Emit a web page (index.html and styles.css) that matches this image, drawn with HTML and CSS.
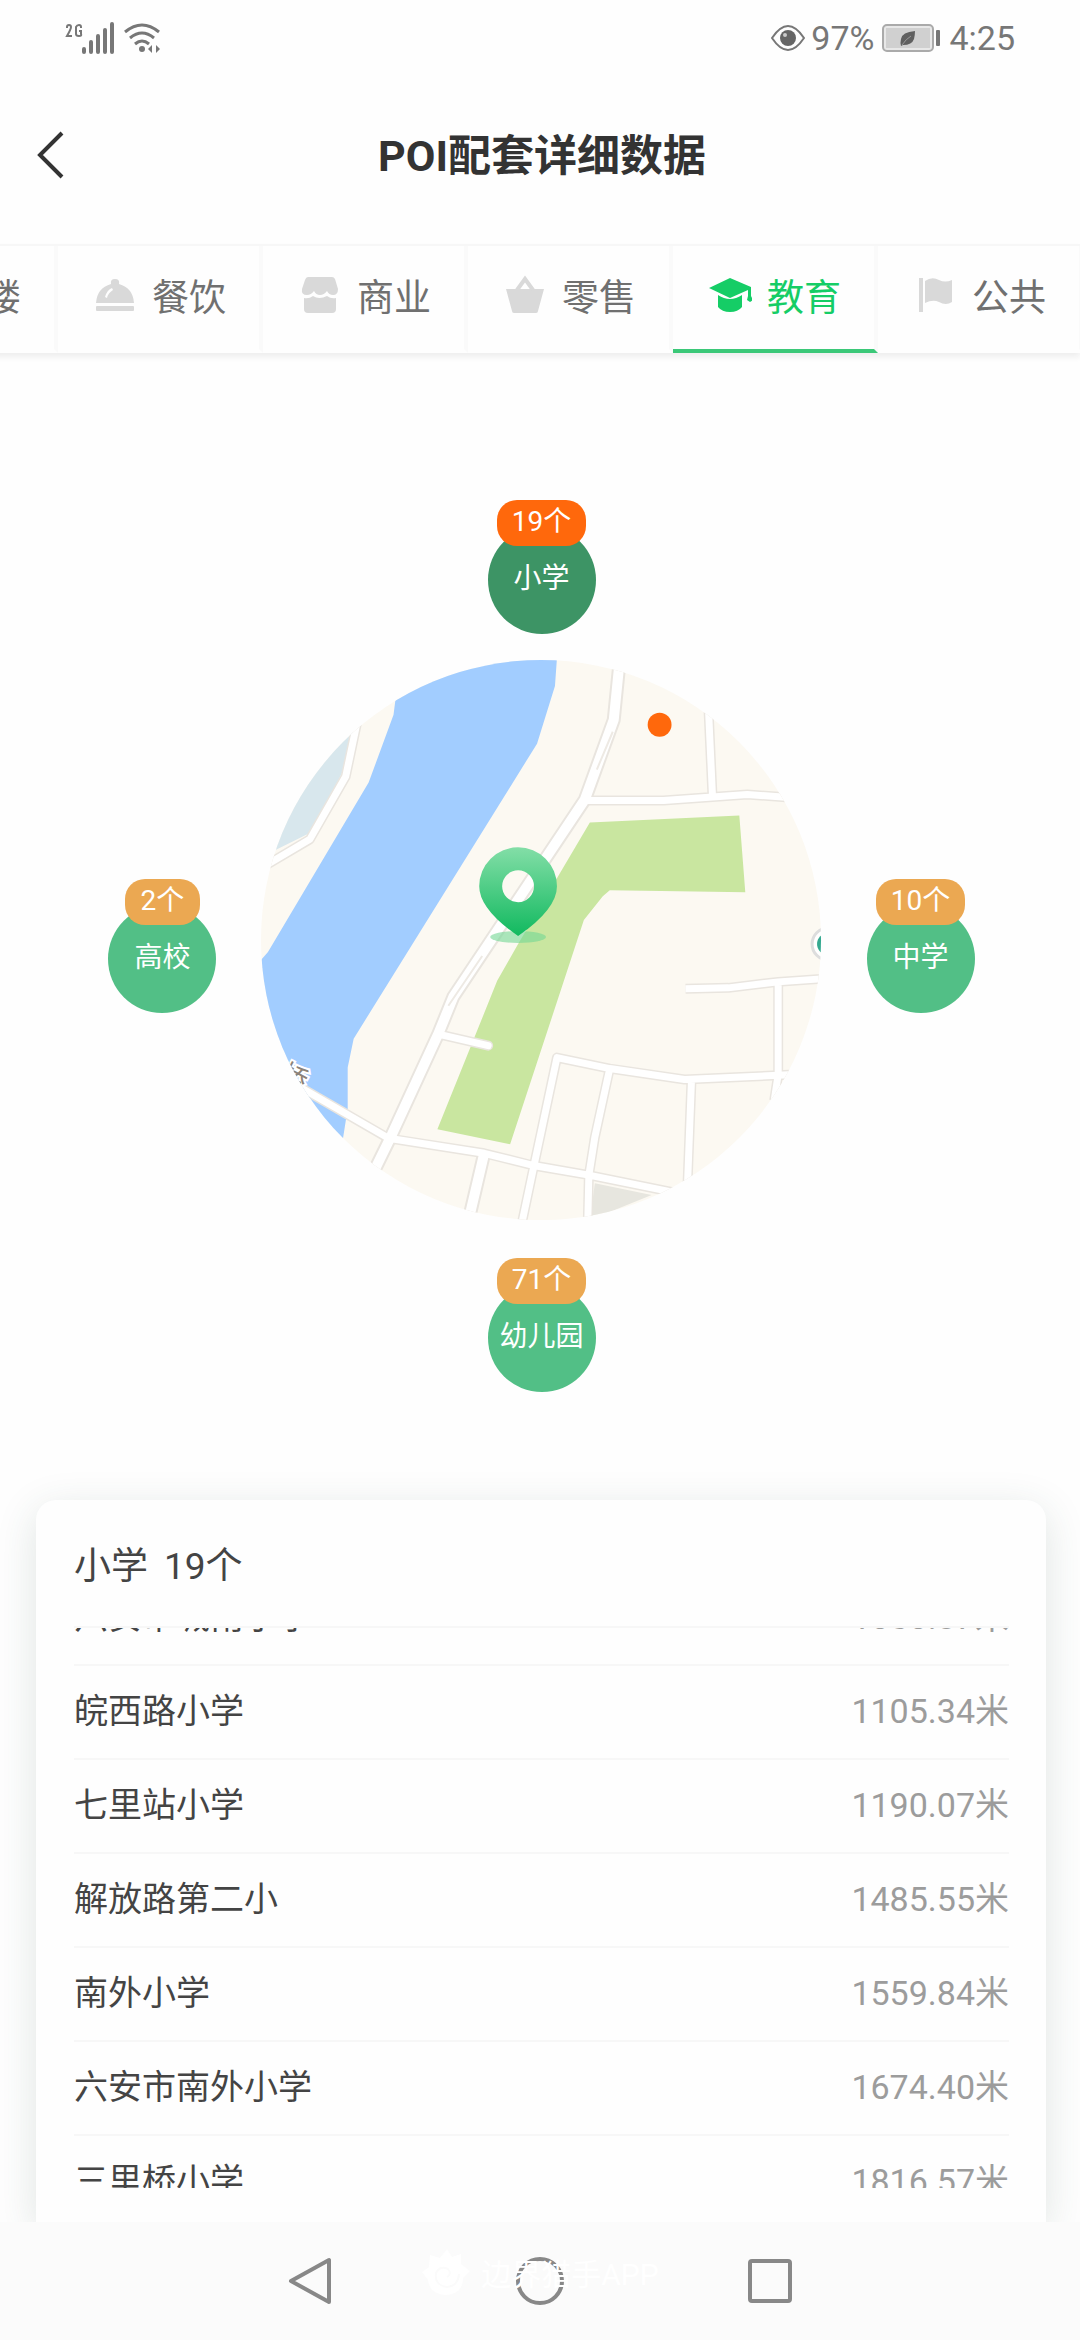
FILE: index.html
```html
<!DOCTYPE html>
<html lang="zh-CN">
<head>
<meta charset="utf-8">
<meta name="viewport" content="width=device-width, initial-scale=1">
<title>POI配套详细数据</title>
<link rel="stylesheet" href="styles.css">
</head>
<body>
<div class="app">
  <div class="status">
    <div class="status-group">
      <svg class="signal" width="98" height="34" viewBox="0 0 98 34" fill="none" aria-hidden="true">
        <path d="M2 7V6Q2 4 4 4T6 6Q6 8 2 15H7M16 7V6Q16 4 14 4T11 6V13Q11 15 14 15T16 13V10H14" stroke="#777" stroke-width="2"/>
        <path d="M19 31v-3M26 31v-10M33 31v-16M40 31v-22M47 31v-28" stroke="#777" stroke-width="4" stroke-linecap="round"/>
        <path d="M60 11q17-14 34 0M65 17q12-10 24 0M70 23q7-6 14 0" stroke="#777" stroke-width="3"/>
        <circle cx="77" cy="28" r="3" fill="#777"/>
        <path d="M87 24v8l-4-4zM91 24v8l4-4z" fill="#777"/>
      </svg>
    </div>
    <div class="status-group">
      <svg width="34" height="30" viewBox="0 0 34 30" aria-hidden="true">
        <path d="M1 15Q9 3 17 3t16 12Q25 27 17 27T1 15z" fill="none" stroke="#777" stroke-width="2"/>
        <circle cx="17" cy="15" r="8" fill="#666"/><circle cx="14" cy="12" r="2" fill="#ccc"/>
      </svg>
      <span>97%</span>
      <svg class="battery" width="58" height="30" viewBox="0 0 58 30" aria-hidden="true">
        <rect x="1" y="2" width="50" height="26" rx="4" fill="#e8e8e8" stroke="#aaa" stroke-width="2"/>
        <rect x="4" y="5" width="44" height="20" fill="#d0d0d0"/>
        <path d="M33 8Q20 9 19 16q-1 4 0 7l2-1q9 0 11-6 1-4 1-8z" fill="#606060"/>
        <path d="M20 22q4-6 9-9" stroke="#999" fill="none"/>
        <rect x="54" y="7" width="4" height="16" rx="1" fill="#777"/>
      </svg>
      <span>4:25</span>
    </div>
  </div>

  <header class="header">
    <button class="back" aria-label="返回">
      <svg width="30" height="50" viewBox="0 0 30 50" fill="none"><path d="M26 3 4 25l22 22" stroke="#333" stroke-width="4"/></svg>
    </button>
    <h1 class="title">POI配套详细数据</h1>
  </header>

  <nav class="tabs">
    <button class="tab"><svg class="tab-icon" viewBox="0 0 44 40" fill="#d9d9d9"><path d="M10 2h24v36H10z"/></svg>大楼</button>
    <button class="tab"><svg class="tab-icon" viewBox="0 0 44 40" fill="#d9d9d9"><path fill-rule="evenodd" d="M3 28Q4 13 18 9q-1-5 4-5t4 5q14 4 15 19zM12 22l2 1q1-5 6-8l-1-2q-5 2-7 9z"/><rect x="3" y="31" width="38" height="5" rx="1"/></svg>餐饮</button>
    <button class="tab"><svg class="tab-icon" viewBox="0 0 44 40" fill="#d9d9d9"><path d="M10 2h24q2 0 3 2l3 10q0 6-5 6-4 0-6-4-3 4-7 4t-6-4q-3 4-7 4-6 0-5-6l3-9q1-3 3-3z"/><path d="M6 23q5 1 9-2 6 4 14 0 4 3 9 2v11q0 4-4 4H10q-4 0-4-4z"/></svg>商业</button>
    <button class="tab"><svg class="tab-icon" viewBox="0 0 44 40" fill="#d9d9d9"><path d="M3 14h38l-6 22q0 2-2 2H11q-2 0-2-2z"/><path d="M14 15 22 4l8 11" fill="none" stroke="#d9d9d9" stroke-width="4"/></svg>零售</button>
    <button class="tab tab-active" aria-current="page"><svg class="tab-icon" viewBox="0 0 44 40" fill="#15cd66"><path d="m22 3 21 9v9l2 4-3 2-3-2 1-4v-6l-18 8-21-10z"/><path d="M10 20q12 8 24 0v12q-4 5-12 5t-12-5z"/></svg>教育</button>
    <button class="tab"><svg class="tab-icon" viewBox="0 0 44 40" fill="#d9d9d9"><path d="M6 3h4v34H6zM12 6q7-5 14-1 6 3 13 0v22q-6 4-13 0-6-3-14 1z"/></svg>公共</button>
  </nav>

  <main class="main">
    <section class="radar">
      <button class="poi poi-top poi-active"><span class="badge">19个</span><span class="disc">小学</span></button>
      <button class="poi poi-left"><span class="badge">2个</span><span class="disc">高校</span></button>
      <svg class="map" viewBox="0 0 562 562" role="img" aria-label="周边地图">
        <defs>
          <clipPath id="round"><circle cx="281" cy="281" r="281"/></clipPath>
          <linearGradient id="pin" x1="0" y1="0" x2="0" y2="1"><stop offset="0" stop-color="#83dea7"/><stop offset="1" stop-color="#11b95f"/></linearGradient>
          <g id="roads" fill="none" stroke-linejoin="round">
            <path d="M97 60 85 117 49 180 5 206"/>
            <path d="M325 141h79l84-6 42 3M449 48l4 87"/>
            <path d="m180 376 48 11" stroke-linecap="round"/>
            <path d="m38 428 90 52 96 15 48 12 57 10 84 17M262 564l12-57 23-108 53 11 75 11 110-5M350 410l-15 69-6 38-1 44M432 421l-4 106"/>
            <path d="m426 330 43-1 50-6 43-3M519 323v93l-4 26"/>
          </g>
          <g id="main-roads" fill="none" stroke-linejoin="round">
            <path d="M360 0 354 60 325 140 193 338 178 375 130 479 108 524M224 495l-15 64"/>
          </g>
        </defs>
        <g clip-path="url(#round)">
          <path d="M0 0h562v562H0z" fill="#fcf9f2"/>
          <path d="M297-2 295 26 277 84 93 380 87 409 87 450 82 482 0 482V301L7 293 108 123 133 55 140 0z" fill="#a2cdff"/>
          <path d="M94 60 88 99 71 135 48 174 10 193 0 100z" fill="#d8e7ed"/>
          <path d="M330 163 480 156 486 233 350 231 343 237 324 261 250 486 177 471 237 322 258 285z" fill="#c9e6a0"/>
          <path d="M335 525 392 537 330 562z" fill="#e7e6df"/>
          <use href="#roads" stroke="#e9e5df" stroke-width="10"/>
          <use href="#main-roads" stroke="#e9e5df" stroke-width="14"/>
          <use href="#roads" stroke="#fff" stroke-width="7"/>
          <use href="#main-roads" stroke="#fff" stroke-width="10"/>
          <path d="M353 72 337 110M222 297 188 347" stroke="#eeeae4" stroke-width="2"/>
          <text x="20" y="430" class="map-label" transform="rotate(28 36 416)">桥</text>
          <circle cx="569" cy="285" r="16" fill="#fff" stroke="#ddd" stroke-width="3"/>
          <circle cx="569" cy="285" r="11" fill="#35a990"/>
        </g>
        <circle cx="400" cy="65" r="12" fill="#ff680c"/>
        <ellipse cx="258" cy="278" rx="28" ry="6" fill="#73d795" fill-opacity=".6"/>
        <path fill-rule="evenodd" d="M258 277Q219 250 219 227a39 39 0 0 1 78 0Q297 250 258 277zM258 211a16 16 0 1 0 0 32 16 16 0 0 0 0-32z" fill="url(#pin)"/>
      </svg>
      <button class="poi poi-right"><span class="badge">10个</span><span class="disc">中学</span></button>
      <button class="poi poi-bottom"><span class="badge">71个</span><span class="disc">幼儿园</span></button>
    </section>

    <section class="card">
      <h2 class="card-title"><span>小学</span><span>19个</span></h2>
      <div class="list-view">
        <ul class="list">
          <li class="row"><span>六安市城南小学</span><span class="distance">1050.87米</span></li>
          <li class="row"><span>皖西路小学</span><span class="distance">1105.34米</span></li>
          <li class="row"><span>七里站小学</span><span class="distance">1190.07米</span></li>
          <li class="row"><span>解放路第二小</span><span class="distance">1485.55米</span></li>
          <li class="row"><span>南外小学</span><span class="distance">1559.84米</span></li>
          <li class="row"><span>六安市南外小学</span><span class="distance">1674.40米</span></li>
          <li class="row"><span>三里桥小学</span><span class="distance">1816.57米</span></li>
        </ul>
      </div>
    </section>
  </main>

  <footer class="sysbar">
    <button class="sys" aria-label="后退"><svg width="50" height="50" viewBox="0 0 50 50"><path d="M44 4v42L6 25z"/></svg></button>
    <button class="sys" aria-label="主页"><svg width="50" height="50" viewBox="0 0 50 50"><circle cx="25" cy="25" r="22"/></svg></button>
    <button class="sys" aria-label="多任务"><svg width="50" height="50" viewBox="0 0 50 50"><rect x="5" y="5" width="40" height="40" rx="2"/></svg></button>
    <div class="watermark">
      <svg width="50" height="50" viewBox="0 0 50 50"><path d="M26 2l5 8 9-3 0 10 9 7-7 7q0 16-17 17-17-1-18-15l-6-8 7-5 1-12 10 3z" fill="#fff"/><path d="M26 30q5-3 1-8-8-4-12 4-2 12 11 14 11-1 12-13" fill="none" stroke="#fbfbfb" stroke-width="2"/></svg>
      <span>边界猎手APP</span>
    </div>
  </footer>
</div>
</body>
</html>
```
FILE: styles.css
```css
* {
  box-sizing: border-box;
}

body {
  margin: 0;
  background: #fefefe;
  color: #444;
  font-family: Roboto, "Noto Sans CJK SC", sans-serif;
}

button {
  border: 0;
  padding: 0;
  background: none;
  color: inherit;
  font: inherit;
}

.app {
  display: flex;
  flex-direction: column;
  height: 100vh;
  overflow: hidden;
}

.status {
  display: flex;
  justify-content: space-between;
  height: 76px;
  padding: 0 65px;
  color: #777;
  font-size: 34px;
}

.status-group {
  display: flex;
  align-items: center;
  gap: 6px;
}

.battery {
  margin: 0 3px 0 2px;
}

.header {
  display: grid;
  grid-template-columns: 72px 1fr 68px;
  align-items: center;
  height: 168px;
  padding: 0 0 10px;
}

.back {
  display: flex;
  padding-left: 36px;
}

.title {
  margin: 0;
  padding-top: 2px;
  color: #333;
  font-size: 43px;
  line-height: 60px;
  font-weight: 700;
  text-align: center;
}

.tabs {
  display: flex;
  height: 109px;
  margin-left: -147px;
  border-top: 2px solid #f7f7f7;
  box-shadow: 0 4px 6px #eee;
}

.tab {
  display: flex;
  flex: 0 0 205px;
  align-items: center;
  justify-content: center;
  gap: 15px;
  padding: 0 0 6px 2px;
  border-right: 4px solid #fafafa;
  border-bottom: 4px solid transparent;
  color: #707070;
  font-size: 37px;
}

.tab-icon {
  width: 44px;
  height: 40px;
}

.tab-active {
  border-bottom-color: #3bc878;
  color: #15cd66;
}

.main {
  display: flex;
  flex: 1;
  flex-direction: column;
  min-height: 0;
}

.radar {
  display: grid;
  grid-template-areas:
    ". top ."
    "left map right"
    ". bottom .";
  grid-template-columns: 108px 52% 108px;
  align-items: center;
  justify-content: center;
  gap: 26px 45px;
  padding: 147px 0 108px 3px;
}

.poi {
  display: flex;
  flex-direction: column;
  align-items: center;
  justify-self: center;
  color: #fff;
  font-size: 28px;
}

.poi-top {
  grid-area: top;
}

.poi-left {
  grid-area: left;
  padding-top: 12px;
}

.poi-right {
  grid-area: right;
  padding-top: 12px;
}

.poi-bottom {
  grid-area: bottom;
  padding-top: 12px;
}

.badge {
  position: relative;
  min-width: 75px;
  height: 46px;
  padding: 0 15px;
  border-radius: 20px;
  background: #eba852;
  line-height: 44px;
}

.disc {
  width: 108px;
  height: 108px;
  margin-top: -20px;
  border-radius: 50%;
  background: #52bf86;
  line-height: 106px;
}

.poi-active .badge {
  background: #ff680c;
}

.poi-active .disc {
  background: #3d9465;
}

.map {
  display: block;
  grid-area: map;
  width: 100%;
}

.map-label {
  fill: #8c8278;
  stroke: #fff;
  stroke-width: 4px;
  paint-order: stroke;
  font-size: 28px;
}

.card {
  display: flex;
  flex: 1;
  flex-direction: column;
  min-height: 0;
  margin: 0 34px 0 36px;
  padding: 0 37px 34px 38px;
  border-radius: 20px 20px 0 0;
  background: #fefefe;
  box-shadow: 0 10px 40px rgba(50, 80, 70, 0.15);
}

.card-title {
  display: flex;
  gap: 16px;
  margin: 0;
  padding: 40px 0 32px;
  font-size: 37px;
  line-height: 54px;
  font-weight: 400;
}

.list-view {
  flex: 1;
  min-height: 0;
  overflow: hidden;
  border-top: 2px solid #f7f7f7;
}

.list {
  margin: -56px 0 0;
  padding: 0;
  list-style: none;
}

.row {
  display: flex;
  align-items: center;
  justify-content: space-between;
  height: 94px;
  padding-bottom: 8px;
  border-bottom: 2px solid #f7f7f7;
  font-size: 34px;
}

.distance {
  color: #9c9c9c;
}

.sysbar {
  position: relative;
  z-index: 1;
  display: grid;
  grid-template-columns: repeat(3, 230px);
  justify-content: center;
  height: 118px;
  background: #fbfbfb;
}

.sys {
  display: flex;
  align-items: center;
  justify-content: center;
  fill: none;
  stroke: #888;
  stroke-width: 4px;
  stroke-linejoin: round;
}

.watermark {
  position: absolute;
  inset: 0;
  display: flex;
  align-items: center;
  justify-content: center;
  gap: 10px;
  padding-bottom: 18px;
  color: #fff;
  font-size: 30px;
  pointer-events: none;
}
```
